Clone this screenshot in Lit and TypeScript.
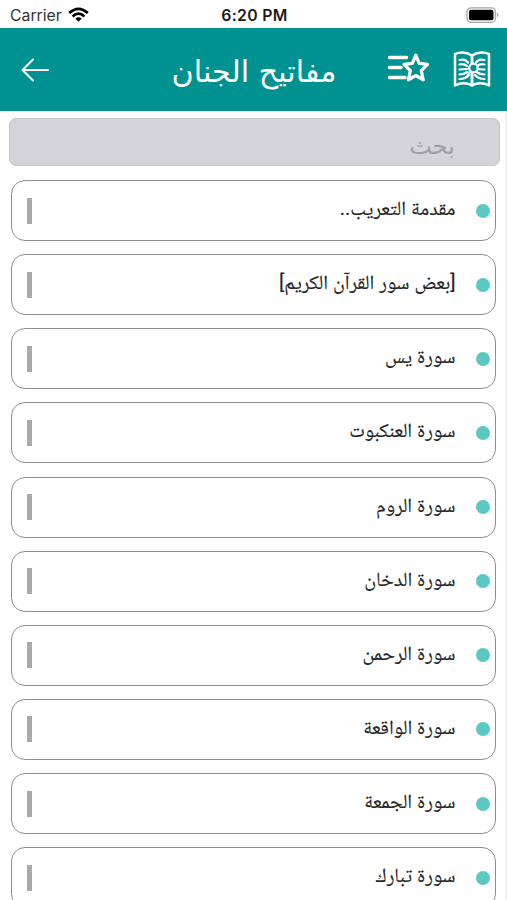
import { LitElement, html, css, svg } from "lit";
import { customElement, property } from "lit/decorators.js";

@customElement("status-bar")
class StatusBar extends LitElement {
  static styles = css`
    :host { display: grid; grid-template-columns: 1fr auto 1fr; align-items: center; height: 28px; padding: 2px 8px 0 10px; box-sizing: border-box; background: #fff; color: #1c1c1c; font: 15.8px Inter, "Liberation Sans", sans-serif; }
    .carrier { display: flex; align-items: center; gap: 6px; color: #333; }
    .time { font-size: 15.8px; font-weight: 600; letter-spacing: 0.35px; }
    .battery { justify-self: end; display: block; }
    svg { display: block; }
  `;
  render() {
    return html`
      <div class="carrier"><span>Carrier</span>
        <svg width="21" height="16" viewBox="0 0 21 16" fill="none" stroke="#000" stroke-width="2.7">
          <path d="M1.2 6.1Q10.5-2.3 19.8 6.1" /><path d="M4.6 9.4Q10.5 4 16.4 9.4" />
          <path d="M10.5 14.8l-3.2-3.2q3.2-2.5 6.4 0z" fill="#000" stroke="none" />
        </svg>
      </div>
      <div class="time">6:20 PM</div>
      <svg class="battery" width="33" height="17" viewBox="0 0 33 17">
        <rect x="1" y="0.8" width="28.5" height="14.5" rx="4" fill="#fff" stroke="#a5a5a5" stroke-width="1.3" />
        <rect x="3" y="2.8" width="24.5" height="10.5" rx="2" fill="#000" />
        <path d="M31 5.5q3 2.5 0 5z" fill="#a5a5a5" />
      </svg>`;
  }
}

@customElement("title-bar")
class TitleBar extends LitElement {
  static styles = css`
    :host { display: grid; grid-template-columns: 1fr auto 1fr; align-items: center; height: 83px; padding: 0 16px 0 21px; box-sizing: border-box; background: #009191; color: #fff; }
    h1 { margin: 0 4px 0 0; font: 400 30.2px/40px "DejaVu Sans", sans-serif; direction: rtl; white-space: nowrap; padding-top: 5px; }
    .actions { justify-self: end; display: flex; align-items: center; gap: 24px; }
    svg { display: block; fill: none; stroke: #fff; stroke-linecap: round; stroke-linejoin: round; }
    .favorites { margin-top: -2px; }
  `;
  render() {
    const page = svg`
      <path d="M19 4.5Q11-.5 2 3V34.5Q11 30 19 34.5V4.5" stroke-width="2.5"/>
      <path d="M6.5 9q5.5-1.5 8.5 2.5M6.5 13.5q4.5-1 7.5 1.5M6.5 18.5q4-.5 7.5-.5M6.5 23.5q4.5 0 8-2.5M6.5 28q6 0 9.5-4" stroke-width="2.2"/>`;
    return html`
      <svg width="28" height="24" viewBox="0 0 28 24" stroke-width="2"><path d="M12 1.5L1.5 12 12 22.5M1.5 12H27" /></svg>
      <h1>مفاتيح الجنان</h1>
      <div class="actions">
        <svg class="favorites" width="42" height="34" viewBox="0 0 42 34" stroke-width="3.5">
          <path d="M2.5 5.5H19.5M2.5 15.5H14M2.5 25.5H18" />
          <path d="M28.8 3.2l3.4 8.2 8.3 1-6.2 6.3 1.9 9.1-7.4-4.3-7.4 4.3 1.9-9.1-6.2-6.3 8.3-1z" stroke-width="3.2" />
        </svg>
        <svg width="38" height="37" viewBox="0 0 38 37">
          ${page}<g transform="translate(38 0) scale(-1 1)">${page}</g>
          <circle cx="20.5" cy="17" r="4.3" fill="#009191" stroke-width="2.3" /><path d="M17.5 20.5l-4 5.5" stroke-width="2" />
        </svg>
      </div>`;
  }
}

@customElement("chapter-row")
class ChapterRow extends LitElement {
  @property() label = "";
  static styles = css`
    :host { display: flex; flex: none; align-items: center; height: 61px; box-sizing: border-box; border: 1.5px solid #8e8e8e; border-radius: 14px; background: #fff; padding: 0 5.5px 0 15px; }
    .mark { width: 5px; height: 26px; background: #a9a9a9; }
    .label { flex: 1; direction: rtl; font: 20px/30px Roboto, "Noto Naskh Arabic", "DejaVu Sans", sans-serif; color: #222; -webkit-text-stroke: 0.15px #222; padding: 0 20px 5px; white-space: nowrap; }
    .dot { width: 14px; height: 14px; border-radius: 50%; background: #5bc8c4; }
  `;
  render() {
    return html`<span class="mark"></span><span class="label">${this.label}</span><span class="dot"></span>`;
  }
}

@customElement("app-root")
class AppRoot extends LitElement {
  static styles = css`
    :host { display: flex; flex-direction: column; height: 900px; overflow: hidden; background: #fff; }
    main { flex: 1; min-height: 0; overflow: hidden; box-sizing: border-box; border-right: 2px solid #f1f1f1; padding: 7px 5px 0 9px; }
    .search { height: 48px; box-sizing: border-box; border: 1.5px solid #c5c5ca; border-radius: 7px; background: #d4d3da; color: #a0a0a5; direction: rtl; padding: 11px 44px 0; font: 24px/32px "DejaVu Sans", sans-serif; }
    .list { display: flex; flex-direction: column; gap: 13.15px; padding: 14px 4px 0 2px; }
  `;
  private chapters = [
    "مقدمة التعريب..",
    "[بعض سور القرآن الكريم]",
    "سورة يس",
    "سورة العنكبوت",
    "سورة الروم",
    "سورة الدخان",
    "سورة الرحمن",
    "سورة الواقعة",
    "سورة الجمعة",
    "سورة تبارك",
  ];
  render() {
    return html`
      <status-bar></status-bar>
      <title-bar></title-bar>
      <main>
        <div class="search">بحث</div>
        <div class="list">${this.chapters.map((c) => html`<chapter-row .label=${c}></chapter-row>`)}</div>
      </main>`;
  }
}
